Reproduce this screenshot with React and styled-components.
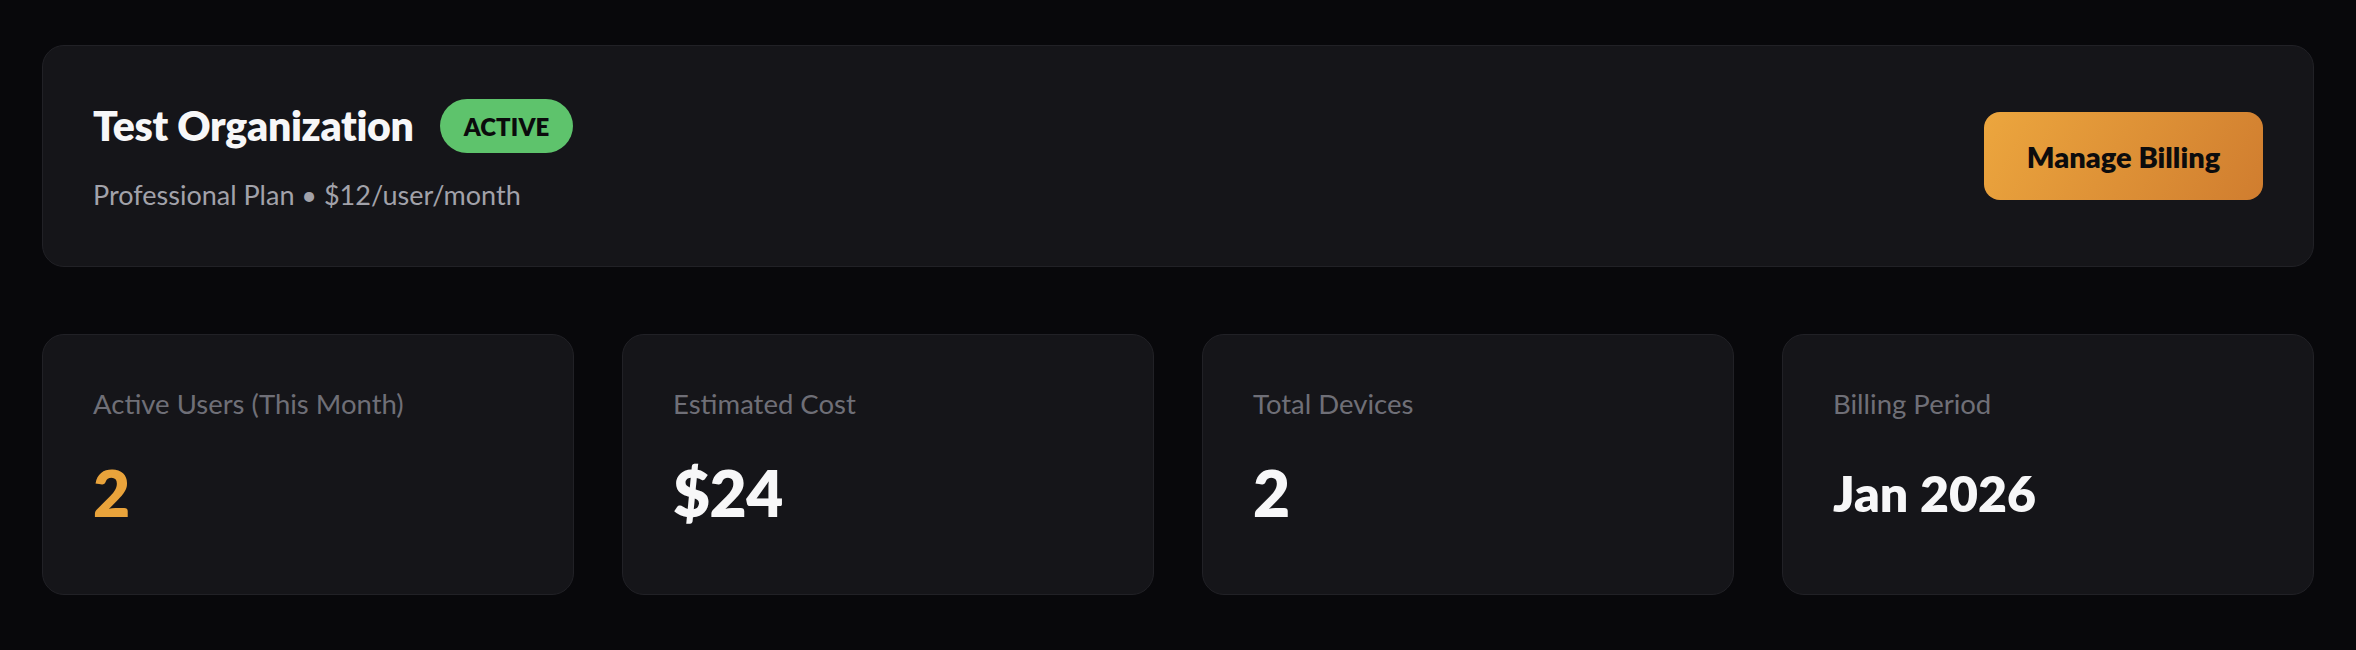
import React from 'react';
import styled, { createGlobalStyle } from 'styled-components';

const GlobalStyle = createGlobalStyle`
  html, body {
    margin: 0;
    padding: 0;
    background: #08080b;
  }
  body {
    font-family: Lato, "Open Sans", sans-serif;
    -webkit-font-smoothing: antialiased;
  }
`;

const Page = styled.div`
  display: flex;
  flex-direction: column;
  gap: 67px;
  padding: 45px 42px;
  min-height: 650px;
  box-sizing: border-box;
  background: #08080b;
`;

const Panel = styled.div`
  box-sizing: border-box;
  background: #151519;
  border: 1px solid #212126;
  border-radius: 22px;
`;

const OrgCard = styled(Panel)`
  display: flex;
  align-items: center;
  justify-content: space-between;
  padding: 53px 50px;
`;

const OrgInfo = styled.div`
  display: flex;
  flex-direction: column;
  gap: 24px;
`;

const TitleRow = styled.div`
  display: flex;
  align-items: center;
  gap: 26px;
  height: 54px;
`;

const OrgName = styled.h1`
  margin: 0;
  font-size: 41px;
  font-weight: 800;
  line-height: 54px;
  color: #f7f7f8;
  letter-spacing: -0.3px;
`;

const StatusBadge = styled.span`
  display: inline-flex;
  align-items: center;
  justify-content: center;
  height: 54px;
  padding: 0 24px;
  box-sizing: border-box;
  border-radius: 999px;
  background: ${(p) => p.$color};
  color: #0b0b0c;
  font-size: 24px;
  font-weight: 800;
  letter-spacing: 0.1px;
`;

const PlanText = styled.p`
  margin: 0;
  font-size: 27px;
  line-height: 36px;
  color: #a2a2aa;
`;

const BillingButton = styled.button`
  width: 279px;
  height: 88px;
  border: none;
  border-radius: 16px;
  background: linear-gradient(120deg, #eca63e 0%, #d07d2f 100%);
  color: #0c0c0d;
  font-family: inherit;
  font-size: 29px;
  font-weight: 800;
  cursor: pointer;
`;

const StatsGrid = styled.div`
  display: grid;
  grid-template-columns: repeat(4, 1fr);
  gap: 48px;
`;

const StatCard = styled(Panel)`
  display: flex;
  flex-direction: column;
  gap: 35px;
  padding: 51px 50px 65px;
  height: 261px;
`;

const StatLabel = styled.div`
  font-size: 27.5px;
  line-height: 36px;
  color: #6f6f77;
`;

const StatValue = styled.div`
  font-size: ${(p) => (p.$small ? '50px' : '64px')};
  line-height: 72px;
  font-weight: 800;
  color: ${(p) => (p.$accent ? '#e9a33b' : '#f7f7f8')};
  letter-spacing: ${(p) => (p.$small ? '0' : '-0.5px')};
`;

const stats = [
  { label: 'Active Users (This Month)', value: '2', accent: true },
  { label: 'Estimated Cost', value: '$24' },
  { label: 'Total Devices', value: '2' },
  { label: 'Billing Period', value: 'Jan 2026', small: true },
];

export default function App() {
  return (
    <>
      <GlobalStyle />
      <Page>
        <OrgCard>
          <OrgInfo>
            <TitleRow>
              <OrgName>Test Organization</OrgName>
              <StatusBadge $color="#5ec36c">ACTIVE</StatusBadge>
            </TitleRow>
            <PlanText>Professional Plan • $12/user/month</PlanText>
          </OrgInfo>
          <BillingButton>Manage Billing</BillingButton>
        </OrgCard>
        <StatsGrid>
          {stats.map((s) => (
            <StatCard key={s.label}>
              <StatLabel>{s.label}</StatLabel>
              <StatValue $accent={s.accent} $small={s.small}>
                {s.value}
              </StatValue>
            </StatCard>
          ))}
        </StatsGrid>
      </Page>
    </>
  );
}
